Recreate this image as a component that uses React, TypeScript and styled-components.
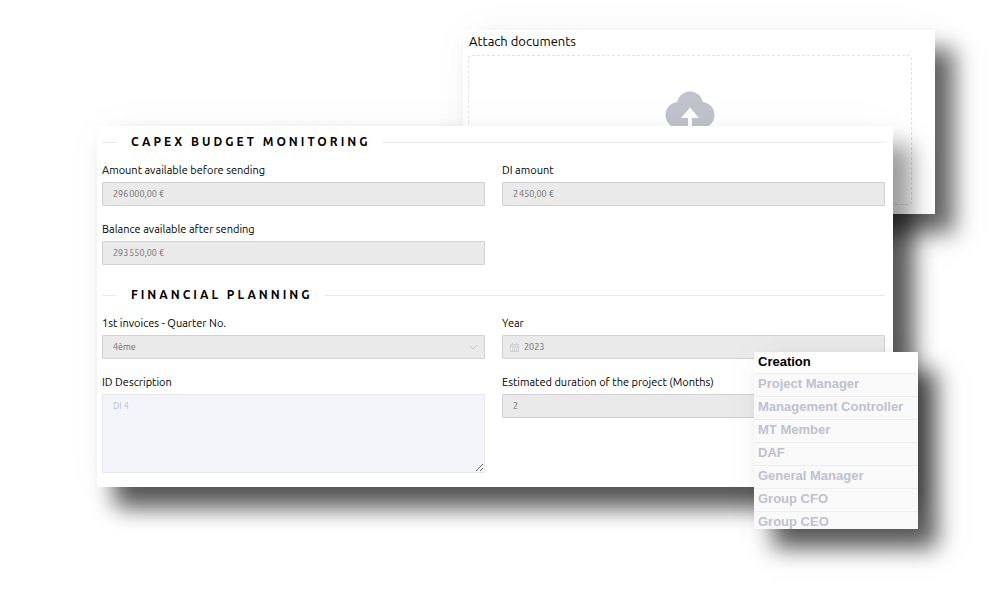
import React from "react";
import styled, { createGlobalStyle, css } from "styled-components";

const GlobalStyle = createGlobalStyle`
  *, *::before, *::after { box-sizing: border-box; }
  body {
    margin: 0;
    background: #fff;
    color: #000;
    font-family: "Ubuntu", "Noto Sans", sans-serif;
  }
`;

const Stage = styled.main`
  position: relative;
  min-height: 100vh;
  padding: 126px 10.7% 60px 9.7%;
  overflow: hidden;
`;

const AttachPanel = styled.section`
  position: absolute;
  z-index: 1;
  top: 30px;
  left: 46.3%;
  right: 6.5%;
  display: flex;
  flex-direction: column;
  padding: 1px 23px 9px 5px;
  background: #fff;
  box-shadow: 19px 19px 22px rgba(0, 0, 0, 0.62), 0 0 40px rgba(0, 0, 0, 0.03);
`;

const AttachLabel = styled.label`
  padding-left: 1px;
  font-size: 13px;
  line-height: 20px;
`;

const DropZone = styled.label`
  display: flex;
  justify-content: center;
  height: 150px;
  margin-top: 4px;
  padding-top: 35px;
  border: 1px dashed #e2e2e4;
  border-radius: 4px;
  cursor: pointer;
`;

const HiddenFile = styled.input`
  position: absolute;
  width: 1px;
  height: 1px;
  opacity: 0;
`;

/* The lower shadow falls behind the attachment panel, the upper one over it. */
const FormLayer = styled.div`
  position: relative;
  &::before {
    content: "";
    position: absolute;
    z-index: 0;
    inset: 0;
    box-shadow: 19px 19px 22px rgba(0, 0, 0, 0.46);
  }
`;

const FormPanel = styled.form`
  position: relative;
  z-index: 2;
  display: flex;
  flex-direction: column;
  gap: 20px;
  padding: 6px 8px 14px 5px;
  background: #fff;
  box-shadow: 19px 19px 22px rgba(0, 0, 0, 0.38), 0 0 40px rgba(0, 0, 0, 0.03);
`;

const Section = styled.section`
  display: flex;
  flex-direction: column;
  gap: 8px;
`;

const SectionTitle = styled.h2`
  display: flex;
  align-items: center;
  margin: 0;
  font-size: 12px;
  font-weight: 700;
  line-height: 20px;
  letter-spacing: 3px;
  text-transform: uppercase;
  &::before, &::after {
    content: "";
    height: 1px;
    background: #e8e8e8;
  }
  &::before { width: 14px; margin-right: 15px; }
  &::after { flex: 1; margin-left: 12px; }
`;

const Fields = styled.div`
  display: grid;
  grid-template-columns: 1fr 1fr;
  gap: 13px 17px;
  align-items: start;
`;

const FieldBox = styled.div`
  display: flex;
  flex-direction: column;
  gap: 2px;
`;

const FieldLabel = styled.label`
  font-size: 11px;
  line-height: 20px;
`;

const Control = styled.div`
  position: relative;
  display: flex;
`;

const boxed = css`
  flex: 1;
  min-width: 0;
  width: 100%;
  margin: 0;
  border: 1px solid #d0d0d2;
  border-radius: 1px;
  outline: none;
  background: #eaeaea;
  color: #6c6c6c;
  font-family: inherit;
  font-size: 9px;
`;

const TextInput = styled.input<{ $icon?: boolean }>`
  ${boxed}
  height: 24px;
  padding: 0 10px 0 ${(p) => (p.$icon ? 21 : 10)}px;
`;

const Select = styled.select`
  ${boxed}
  height: 24px;
  padding: 0 10px;
  appearance: none;
`;

const TextArea = styled.textarea`
  ${boxed}
  height: 79px;
  padding: 4px 10px;
  border-color: #e6e7ec;
  background: #f4f5fa;
  line-height: 14px;
  resize: vertical;
  &::placeholder { color: #bcbec9; opacity: 1; }
`;

const Adornment = styled.span<{ $side: "left" | "right" }>`
  position: absolute;
  top: 0;
  bottom: 0;
  ${(p) => p.$side}: 8px;
  display: flex;
  align-items: center;
  pointer-events: none;
`;

const Steps = styled.ol`
  position: absolute;
  z-index: 3;
  top: 352px;
  left: 75.4%;
  right: 8.2%;
  margin: 0;
  padding: 0;
  list-style: none;
  background: #f9f9f9;
  box-shadow: 19px 19px 22px rgba(0, 0, 0, 0.66), 0 0 40px rgba(0, 0, 0, 0.03);
`;

const Step = styled.li<{ $active: boolean }>`
  height: ${(p) => (p.$active ? 21 : 23)}px;
  padding-left: 4px;
  border-top: ${(p) => (p.$active ? "none" : "1px solid #eeeeee")};
  background: ${(p) => (p.$active ? "#fff" : "transparent")};
  color: ${(p) => (p.$active ? "#000" : "#c0c1cc")};
  font-family: "Liberation Sans", Arial, sans-serif;
  font-size: 13px;
  font-weight: 700;
  line-height: 20px;
  white-space: nowrap;
  &:last-child { height: 18px; }
`;

const CloudUpload = () => (
  <svg width="50" height="37" viewBox="0 0 50 37" aria-hidden="true">
    <g fill="#c0c2cc">
      <circle cx="25" cy="13.5" r="13" />
      <circle cx="13.5" cy="24" r="13" />
      <circle cx="36.5" cy="24" r="13" />
      <path d="M13 20h24v17H13z" />
    </g>
    <path d="M25 16.5 34 27h-7v10h-4V27h-7z" fill="#fff" />
  </svg>
);

const Chevron = () => (
  <svg width="8" height="5" viewBox="0 0 8 5" aria-hidden="true">
    <path d="M.5.5 4 4 7.5.5" fill="none" stroke="#b9bbc4" strokeWidth="0.8" />
  </svg>
);

const Calendar = () => (
  <svg width="9" height="9" viewBox="0 0 9 9" aria-hidden="true">
    <path
      d="M.5 1.5h8v7h-8zM.5 3.3h8M2.5 0v2M6.5 0v2"
      fill="none"
      stroke="#c4c6ce"
      strokeWidth="0.7"
    />
    <path d="M2 5h5M2 7h5" stroke="#b4b6c0" strokeWidth="0.9" strokeDasharray="1 1" />
  </svg>
);

function Field({ id, label, children }: { id: string; label: string; children: React.ReactNode }) {
  return (
    <FieldBox>
      <FieldLabel htmlFor={id}>{label}</FieldLabel>
      <Control>{children}</Control>
    </FieldBox>
  );
}

const steps = [
  "Creation",
  "Project Manager",
  "Management Controller",
  "MT Member",
  "DAF",
  "General Manager",
  "Group CFO",
  "Group CEO",
];

export default function App() {
  return (
    <>
      <GlobalStyle />
      <Stage>
        <AttachPanel>
          <AttachLabel htmlFor="documents">Attach documents</AttachLabel>
          <DropZone>
            <HiddenFile id="documents" type="file" multiple />
            <CloudUpload />
          </DropZone>
        </AttachPanel>

        <FormLayer>
          <FormPanel>
            <Section>
              <SectionTitle>Capex budget monitoring</SectionTitle>
              <Fields>
                <Field id="available" label="Amount available before sending">
                  <TextInput id="available" readOnly value={"296\u202f000,00 €"} />
                </Field>
                <Field id="amount" label="DI amount">
                  <TextInput id="amount" readOnly value={"2\u202f450,00 €"} />
                </Field>
                <Field id="balance" label="Balance available after sending">
                  <TextInput id="balance" readOnly value={"293\u202f550,00 €"} />
                </Field>
              </Fields>
            </Section>

            <Section>
              <SectionTitle>Financial planning</SectionTitle>
              <Fields>
                <Field id="quarter" label="1st invoices - Quarter No.">
                  <Select id="quarter" defaultValue="4">
                    <option value="4">4ème</option>
                  </Select>
                  <Adornment $side="right">
                    <Chevron />
                  </Adornment>
                </Field>
                <Field id="year" label="Year">
                  <TextInput id="year" $icon readOnly value="2023" />
                  <Adornment $side="left">
                    <Calendar />
                  </Adornment>
                </Field>
                <Field id="description" label="ID Description">
                  <TextArea id="description" placeholder="DI 4" />
                </Field>
                <Field id="duration" label="Estimated duration of the project (Months)">
                  <TextInput id="duration" readOnly value="2" />
                </Field>
              </Fields>
            </Section>
          </FormPanel>
        </FormLayer>

        <Steps>
          {steps.map((name, i) => (
            <Step key={name} $active={i === 0}>
              {name}
            </Step>
          ))}
        </Steps>
      </Stage>
    </>
  );
}
